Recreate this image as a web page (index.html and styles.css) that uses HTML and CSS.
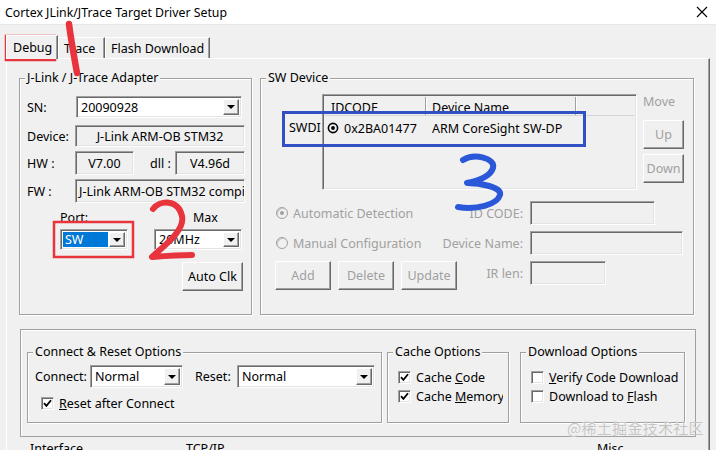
FILE: index.html
```html
<!DOCTYPE html>
<html>
<head>
<meta charset="utf-8">
<link rel="stylesheet" href="styles.css">
</head>
<body>
<div class="titlebar">
  <span class="title">Cortex JLink/JTrace Target Driver Setup</span>
  <svg class="close" width="12" height="12" viewBox="0 0 12 12"><path d="M1 1L11 11M11 1L1 11" stroke="#000" stroke-width="1.1" fill="none"/></svg>
</div>
<div class="tabs">
  <div class="tab active t-debug">Debug</div>
  <div class="tab t-trace">Trace</div>
  <div class="tab t-flash">Flash Download</div>
</div>
<div class="page">
  <div class="groups">
    <div class="group adapter">
      <span class="gtitle">J-Link / J-Trace Adapter</span>
      <div class="arow a-sn">
        <span class="alabel">SN:</span>
        <div class="combo w166"><span class="cval">20090928</span><span class="carrow"><i></i></span></div>
      </div>
      <div class="arow a-dev">
        <span class="alabel w48">Device:</span>
        <div class="rbox w170 center">J-Link ARM-OB STM32</div>
      </div>
      <div class="arow a-hw">
        <span class="alabel w48">HW :</span>
        <div class="rbox w59 center">V7.00</div>
        <span class="dll">dll :</span>
        <div class="rbox w70 center">V4.96d</div>
      </div>
      <div class="arow a-fw">
        <span class="alabel w48">FW :</span>
        <div class="rbox w170 clip">J-Link ARM-OB STM32 compiled Aug 22 2012 10:53:42</div>
      </div>
      <div class="arow a-lbls">
        <span class="portlbl">Port:</span>
        <span>Max</span>
      </div>
      <div class="arow a-combos">
        <div class="combo w68"><span class="cval sel">SW</span><span class="carrow"><i></i></span></div>
        <div class="combo w88 maxc"><span class="cval">20MHz</span><span class="carrow"><i></i></span></div>
      </div>
      <div class="arow a-clk">
        <div class="btn autoclk">Auto Clk</div>
      </div>
    </div>

    <div class="group sw">
      <span class="gtitle">SW Device</span>
      <div class="sw-top">
        <div class="swdi-col"><span>SWDI</span></div>
        <div class="listbox">
          <div class="lhead">
            <div class="hc hc1">IDCODE</div>
            <div class="hc hc2">Device Name</div>
            <div class="hc hc3"></div>
          </div>
          <div class="lrow">
            <svg class="lradio" width="12" height="12" viewBox="0 0 12 12"><circle cx="6" cy="6" r="4.6" fill="none" stroke="#000" stroke-width="1.6"/><circle cx="6" cy="6" r="1.9" fill="#000"/></svg>
            <span class="lid">0x2BA01477</span>
            <span class="lname">ARM CoreSight SW-DP</span>
          </div>
        </div>
        <div class="move-col">
          <span class="movelbl">Move</span>
          <div class="btn dis mbtn up">Up</div>
          <div class="btn dis mbtn down">Down</div>
        </div>
      </div>
      <div class="sw-grid">
        <div class="radio-line"><span class="radio on"></span><span>Automatic Detection</span></div>
        <div class="glbl">ID CODE:</div>
        <div class="rbox dbox w125"></div>

        <div class="radio-line"><span class="radio"></span><span>Manual Configuration</span></div>
        <div class="glbl">Device Name:</div>
        <div class="rbox dbox w153"></div>

        <div class="btnrow">
          <div class="btn dis sbtn">Add</div>
          <div class="btn dis sbtn">Delete</div>
          <div class="btn dis sbtn">Update</div>
        </div>
        <div class="glbl">IR len:</div>
        <div class="rbox dbox w76 h25"></div>
      </div>
    </div>
  </div>

  <div class="group bottom-box">
    <div class="group cr">
      <span class="gtitle">Connect &amp; Reset Options</span>
      <div class="cr-row">
        <span class="crlbl">Connect:</span>
        <div class="combo w93 h23"><span class="cval">Normal</span><span class="carrow"><i></i></span></div>
        <span class="crlbl rst">Reset:</span>
        <div class="combo w138 h23"><span class="cval">Normal</span><span class="carrow"><i></i></span></div>
      </div>
      <div class="chkrow cr-chk">
        <span class="chk"><svg width="9" height="9" viewBox="0 0 9 9"><path d="M1 4.2L3.4 6.8L8 1.2" stroke="#000" stroke-width="1.8" fill="none"/></svg></span>
        <span><u>R</u>eset after Connect</span>
      </div>
    </div>
    <div class="group cache">
      <span class="gtitle">Cache Options</span>
      <div class="chkrow">
        <span class="chk"><svg width="9" height="9" viewBox="0 0 9 9"><path d="M1 4.2L3.4 6.8L8 1.2" stroke="#000" stroke-width="1.8" fill="none"/></svg></span>
        <span>Cache <u>C</u>ode</span>
      </div>
      <div class="chkrow">
        <span class="chk"><svg width="9" height="9" viewBox="0 0 9 9"><path d="M1 4.2L3.4 6.8L8 1.2" stroke="#000" stroke-width="1.8" fill="none"/></svg></span>
        <span>Cache <u>M</u>emory</span>
      </div>
    </div>
    <div class="group dl">
      <span class="gtitle">Download Options</span>
      <div class="chkrow">
        <span class="chk"></span>
        <span><u>V</u>erify Code Download</span>
      </div>
      <div class="chkrow">
        <span class="chk"></span>
        <span>Download to <u>F</u>lash</span>
      </div>
    </div>
  </div>

  <div class="cutrow">
    <span class="cut1">Interface</span>
    <span class="cut2">TCP/IP</span>
    <span class="cut3">Misc</span>
  </div>
</div>

<div class="watermark">@稀土掘金技术社区</div>

<svg class="marks" width="716" height="450" viewBox="0 0 716 450">
  <rect x="6" y="36" width="49" height="24" fill="none" stroke="#e8343c" stroke-width="2.5"/>
  <path d="M69 24 C71 40 74 56 77 73" fill="none" stroke="#e8343c" stroke-width="6.5" stroke-linecap="round"/>
  <rect x="54" y="222" width="79" height="35" fill="none" stroke="#e8343c" stroke-width="2.5"/>
  <path d="M153 209 C160 200 178 199 182 216 C185 230 166 244 152 257 C165 256 180 255 192 255" fill="none" stroke="#e8343c" stroke-width="6" stroke-linecap="round" stroke-linejoin="round"/>
  <rect x="283.5" y="112.5" width="301" height="33" fill="none" stroke="#3050c4" stroke-width="3"/>
  <path d="M463 160 C474 153 496 158 493 168 C490 177 477 181 467 183 C480 183 502 187 500 195 C497 205 476 210 458 207" fill="none" stroke="#2b58d8" stroke-width="6" stroke-linecap="round" stroke-linejoin="round"/>
</svg>
</body>
</html>
```

FILE: styles.css
```css
* { box-sizing: border-box; }
html, body { margin: 0; padding: 0; }
body {
  width: 716px;
  height: 450px;
  overflow: hidden;
  position: relative;
  background: #f0f0f0;
  font-family: "Noto Sans", "Open Sans", sans-serif;
  font-size: 12.5px;
  color: #000;
}

/* title bar */
.titlebar {
  height: 25px;
  background: #fff;
  display: flex;
  align-items: center;
  justify-content: space-between;
  padding: 0 8px 0 5px;
  border-bottom: 1px solid #e8e8e8;
}
.title { font-size: 12.3px; }
.close { display: block; }

/* tabs */
.tabs {
  height: 33px;
  display: flex;
  align-items: flex-end;
  padding-left: 6px;
}
.tab {
  height: 21px;
  display: flex;
  align-items: center;
  padding-left: 5px;
  border-top: 1px solid #fff;
  border-left: 1px solid #fff;
  border-right: 1px solid #696969;
  box-shadow: inset -1px 0 0 #a0a0a0;
  white-space: nowrap;
}
.tab.active {
  height: 24px;
  margin-bottom: -1px;
  position: relative;
  z-index: 1;
  background: #f0f0f0;
  padding-left: 6px;
}
.t-debug { width: 52px; }
.t-trace { width: 47px; }
.t-flash { width: 105px; }

/* page */
.page {
  margin-left: 6px;
  width: 704px;
  height: 400px;
  border-top: 1px solid #fff;
  border-left: 1px solid #fff;
  border-right: 1px solid #696969;
  box-shadow: inset -1px 0 0 #a0a0a0;
  padding: 19px 0 0 12px;
}
.groups { display: flex; gap: 8px; }

.group {
  position: relative;
  border: 1px solid #a0a0a0;
  box-shadow: inset 1px 1px 0 #fff, 1px 1px 0 #fff;
}
.gtitle {
  position: absolute;
  top: -9px;
  left: 5px;
  padding: 0 2px;
  line-height: 16px;
  background: #f0f0f0;
  white-space: nowrap;
}

/* adapter group */
.adapter {
  width: 233px;
  height: 237px;
  padding: 17px 0 0 7px;
  display: flex;
  flex-direction: column;
}
.arow { display: flex; align-items: center; }
.alabel { width: 49px; }
.alabel.w48 { width: 48px; }
.a-sn { height: 22px; }
.a-dev { height: 22px; margin-top: 7px; }
.a-hw { height: 24px; margin-top: 4px; }
.a-fw { height: 24px; margin-top: 4px; }
.a-lbls { height: 16px; margin-top: 6px; padding-left: 33px; }
.portlbl { width: 133px; }
.a-combos { height: 21px; margin-top: 4px; padding-left: 33px; }
.maxc { margin-left: 26px; }
.a-clk { margin-top: 12px; padding-left: 155px; }
.dll { margin-left: 16px; width: 25px; }

/* read-only / disabled boxes */
.rbox {
  height: 100%;
  background: #f0f0f0;
  border: 1px solid;
  border-color: #a0a0a0 #fff #fff #a0a0a0;
  box-shadow: inset 1px 1px 0 #696969, inset -1px -1px 0 #e3e3e3;
  display: flex;
  align-items: center;
  white-space: nowrap;
  overflow: hidden;
}
.rbox.center { justify-content: center; }
.rbox.clip { padding-left: 3px; }
.w59 { width: 59px; }
.w70 { width: 70px; }
.w170 { width: 170px; }
.w125 { width: 125px; }
.w153 { width: 153px; }
.w76 { width: 76px; }
.h25 { height: 25px; }
.dbox { height: 24px; }

/* combo boxes */
.combo {
  height: 100%;
  background: #fff;
  border: 1px solid;
  border-color: #a0a0a0 #fff #fff #a0a0a0;
  box-shadow: inset 1px 1px 0 #696969, inset -1px -1px 0 #e3e3e3;
  display: flex;
  align-items: stretch;
  padding: 2px;
}
.w166 { width: 166px; }
.w68 { width: 68px; }
.w88 { width: 88px; }
.w93 { width: 93px; }
.w138 { width: 138px; }
.h23 { height: 23px; }
.cval {
  flex: 1;
  display: flex;
  align-items: center;
  padding-left: 2px;
  white-space: nowrap;
  overflow: hidden;
}
.cval.sel { background: #0078d7; color: #fff; margin-right: 1px; }
.carrow {
  width: 16px;
  background: #f0f0f0;
  border: 1px solid;
  border-color: #fff #696969 #696969 #fff;
  box-shadow: inset -1px -1px 0 #a0a0a0;
  display: flex;
  align-items: center;
  justify-content: center;
}
.carrow i {
  display: block;
  width: 0;
  height: 0;
  border-left: 4px solid transparent;
  border-right: 4px solid transparent;
  border-top: 4px solid #000;
}

/* buttons */
.btn {
  background: #f0f0f0;
  border: 1px solid;
  border-color: #fff #696969 #696969 #fff;
  box-shadow: inset -1px -1px 0 #a0a0a0;
  display: flex;
  align-items: center;
  justify-content: center;
  white-space: nowrap;
}
.btn.dis { color: #a0a0a0; }
.autoclk { width: 61px; height: 29px; }

/* SW device group */
.sw {
  width: 434px;
  height: 237px;
  padding-top: 15px;
}
.sw-top { display: flex; height: 96px; }
.swdi-col { width: 61px; padding: 26px 0 0 28px; line-height: 16px; }
.listbox {
  width: 315px;
  height: 96px;
  border: 1px solid;
  border-color: #a0a0a0 #fff #fff #a0a0a0;
  box-shadow: inset 1px 1px 0 #696969, inset -1px -1px 0 #e3e3e3;
  padding: 2px 2px 0 2px;
  background: #f0f0f0;
}
.lhead {
  display: flex;
  height: 19px;
  border-bottom: 1px solid #d5d5d5;
}
.hc {
  padding: 3px 0 0 6px;
  line-height: 16px;
  border-right: 1px solid #a0a0a0;
  box-shadow: 1px 0 0 #fff;
}
.hc1 { width: 101px; }
.hc2 { width: 150px; }
.hc3 { flex: 1; border-right: none; box-shadow: none; }
.lrow {
  display: flex;
  align-items: center;
  height: 24px;
  padding-left: 2px;
}
.lradio { display: block; margin-right: 5px; }
.lid { width: 88px; }
.move-col { margin-left: 6px; display: flex; flex-direction: column; }
.movelbl { line-height: 16px; color: #a0a0a0; }
.mbtn { width: 41px; height: 29px; }
.up { margin-top: 10px; }
.down { margin-top: 5px; }

.sw-grid {
  margin-top: 11px;
  padding-left: 14px;
  display: grid;
  grid-template-columns: 168px 73px auto;
  grid-template-rows: 24px 24px 29px;
  column-gap: 7px;
  row-gap: 6px;
  align-items: start;
  color: #a0a0a0;
}
.radio-line { display: flex; align-items: center; height: 24px; white-space: nowrap; }
.radio {
  width: 12px;
  height: 12px;
  margin: 0 5px 0 1px;
  border-radius: 50%;
  background: #f0f0f0;
  border: 1px solid #a0a0a0;
  box-shadow: inset 1px 1px 0 #c8c8c8;
  display: flex;
  align-items: center;
  justify-content: center;
}
.radio.on::after {
  content: "";
  width: 4px;
  height: 4px;
  border-radius: 50%;
  background: #a0a0a0;
}
.glbl {
  height: 24px;
  display: flex;
  align-items: center;
  justify-content: flex-end;
  white-space: nowrap;
}
.btnrow { display: flex; gap: 7px; }
.sbtn { width: 56px; height: 29px; flex: none; }

/* bottom box */
.bottom-box {
  margin: 14px 0 0 1px;
  width: 676px;
  height: 108px;
  padding: 22px 0 0 6px;
  display: flex;
  align-items: flex-start;
  box-shadow: inset 1px 1px 0 #fff;
}
.cr { width: 355px; height: 71px; padding: 12px 0 0 7px; }
.cache { width: 122px; height: 71px; margin-left: 5px; padding: 15px 0 0 10px; }
.dl { width: 165px; height: 71px; margin-left: 11px; padding: 15px 0 0 10px; }
.cr-row { display: flex; align-items: center; height: 23px; }
.crlbl { width: 55px; }
.crlbl.rst { width: 42px; margin-left: 12px; }
.chkrow {
  display: flex;
  align-items: center;
  height: 19px;
  white-space: nowrap;
  overflow: hidden;
  margin-right: 5px;
}
.cr-chk { margin-top: 6px; padding-left: 6px; }
.chk {
  flex: none;
  width: 13px;
  height: 13px;
  margin-right: 5px;
  background: #fff;
  border: 1px solid;
  border-color: #a0a0a0 #fff #fff #a0a0a0;
  box-shadow: inset 1px 1px 0 #696969, inset -1px -1px 0 #e3e3e3;
  display: flex;
  align-items: center;
  justify-content: center;
}
.chk svg { display: block; }

.cutrow {
  margin-top: 4px;
  position: relative;
  height: 16px;
  line-height: 16px;
  display: flex;
}
.cut1 { margin-left: 11px; width: 156px; }
.cut2 { width: 411px; }

.watermark {
  position: absolute;
  left: 567px;
  top: 418px;
  font-family: "Noto Sans CJK SC", sans-serif;
  font-size: 15px;
  line-height: 20px;
  color: #c4c4c4;
  text-shadow: 0 0 1px #fff;
  letter-spacing: 0.3px;
}
.marks {
  position: absolute;
  left: 0;
  top: 0;
  pointer-events: none;
}
```
